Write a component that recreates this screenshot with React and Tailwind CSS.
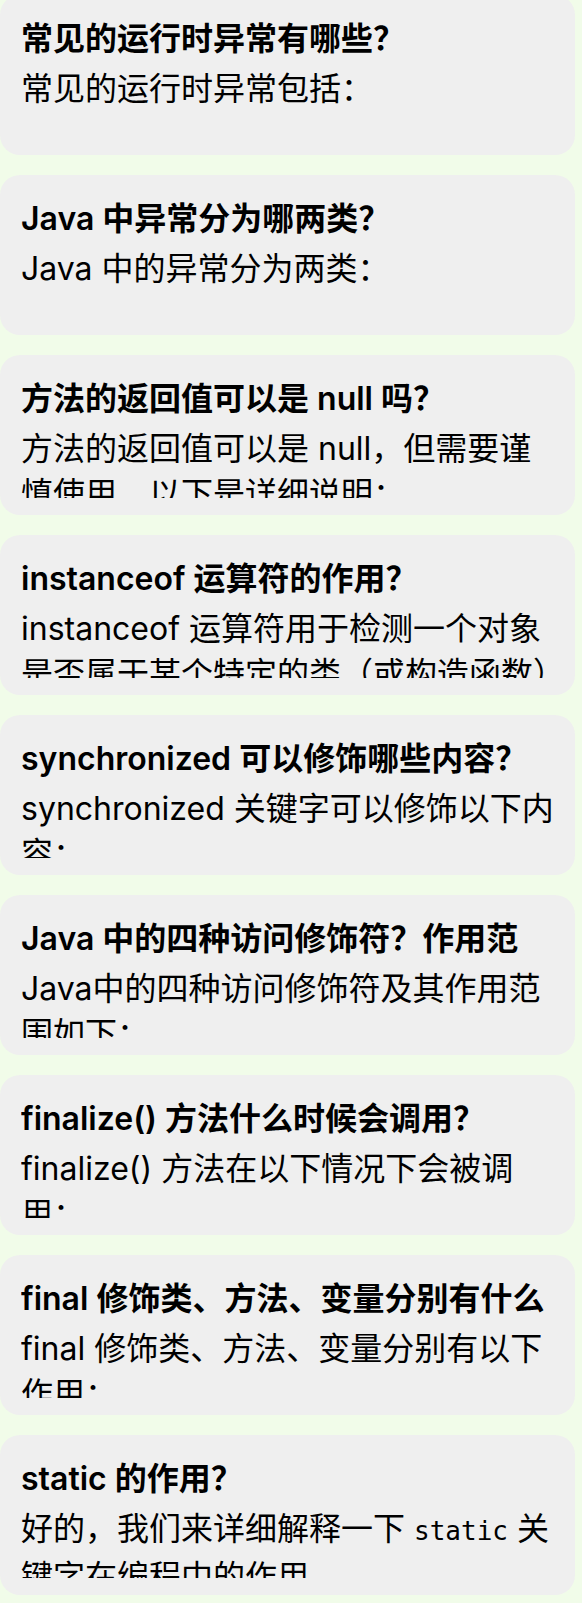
const items = [
  { q: '常见的运行时异常有哪些？', a: '常见的运行时异常包括：' },
  { q: 'Java 中异常分为哪两类？', a: 'Java 中的异常分为两类：' },
  { q: '方法的返回值可以是 null 吗？', a: '方法的返回值可以是 null，但需要谨慎使用，以下是详细说明：' },
  { q: 'instanceof 运算符的作用？', a: 'instanceof 运算符用于检测一个对象是否属于某个特定的类（或构造函数）的实例。' },
  { q: 'synchronized 可以修饰哪些内容？', a: 'synchronized 关键字可以修饰以下内容：' },
  { q: 'Java 中的四种访问修饰符？作用范围？', a: 'Java中的四种访问修饰符及其作用范围如下：' },
  { q: 'finalize() 方法什么时候会调用？', a: 'finalize() 方法在以下情况下会被调用：' },
  { q: 'final 修饰类、方法、变量分别有什么作用？', a: 'final 修饰类、方法、变量分别有以下作用：' },
  {
    q: 'static 的作用？',
    a: (
      <>
        好的，我们来详细解释一下 <code className="font-['DejaVu_Sans_Mono',monospace] text-[26px]">static</code> 关键字在编程中的作用。
      </>
    ),
  },
]

// title shows only its first line; body shows a line and a half
function QaCard({ q, a }) {
  return (
    <div className="h-[160px] rounded-[20px] bg-[#efefef] pl-[21px] pr-[20px] pt-[21px] text-black">
      <div className="h-[45px] overflow-hidden text-[32px] leading-[45px] font-semibold">{q}</div>
      <div className="mt-[5px] max-h-[72px] overflow-hidden text-[32px] leading-[45px]">{a}</div>
    </div>
  )
}

export default function App() {
  return (
    <div className="min-h-screen bg-[#f1fce9] pr-[7px] font-['Inter','Noto_Sans_CJK_SC',sans-serif]">
      <div className="flex flex-col gap-[20px] -mt-[5px]">
        {items.map((it, i) => <QaCard key={i} q={it.q} a={it.a} />)}
      </div>
    </div>
  )
}
